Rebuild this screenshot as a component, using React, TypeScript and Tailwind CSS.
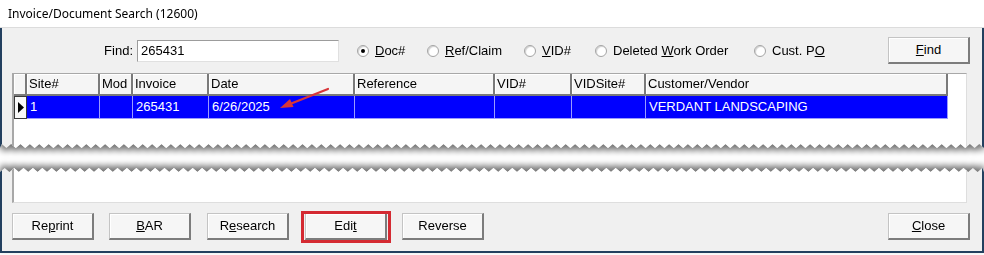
import type { ReactNode } from "react";

const W = 984;

// zig-zag "torn paper" edge, returned as a clip-path polygon
function tornBottom(h: number, amp = 4, period = 9.4) {
  const pts = ["0px 0px", `${W}px 0px`];
  let i = 0;
  for (let x = W; x > -period; x -= period / 2, i++) {
    pts.push(`${Math.max(x, 0).toFixed(1)}px ${i % 2 ? h - amp : h}px`);
  }
  return `polygon(${pts.join(",")})`;
}

function tornTop(h: number, amp = 4, period = 9.4) {
  const pts: string[] = [];
  let i = 0;
  for (let x = 0; x < W + period; x += period / 2, i++) {
    pts.push(`${Math.min(x, W).toFixed(1)}px ${i % 2 ? 0 : amp}px`);
  }
  pts.push(`${W}px ${h}px`, `0px ${h}px`);
  return `polygon(${pts.join(",")})`;
}

const COLS = [
  { label: "", w: 13 },
  { label: "Site#", w: 73, v: "1" },
  { label: "Mod", w: 33, v: "" },
  { label: "Invoice", w: 76, v: "265431" },
  { label: "Date", w: 146, v: "6/26/2025" },
  { label: "Reference", w: 140, v: "" },
  { label: "VID#", w: 77, v: "" },
  { label: "VIDSite#", w: 74, v: "" },
  { label: "Customer/Vendor", w: 302, v: "VERDANT LANDSCAPING" },
];

function Btn({ children, className = "" }: { children: ReactNode; className?: string }) {
  return (
    <button
      className={`relative flex h-[27px] w-[82px] items-center justify-center border-t border-l border-[#c4c4c4] border-r-2 border-b-2 border-r-[#7c7c7c] border-b-[#7c7c7c] bg-[#f6f6f6] text-[13px] text-black shadow-[inset_1px_1px_0_#ffffff] ${className}`}
    >
      {children}
    </button>
  );
}

function Radio({ checked, w, children }: { checked?: boolean; w: number; children: ReactNode }) {
  return (
    <div className="flex items-center gap-[6px]" style={{ width: w }}>
      <span className="flex h-[12px] w-[12px] shrink-0 items-center justify-center rounded-full border border-[#a4a4a4] bg-white shadow-[inset_1px_1px_1px_#d0d0d0]">
        {checked && <span className="h-[4px] w-[4px] rounded-full bg-black" />}
      </span>
      <span className="text-[13px] text-black">{children}</span>
    </div>
  );
}

export default function App() {
  return (
    <div className="flex h-[255px] w-[984px] flex-col overflow-hidden bg-white font-['Liberation_Sans',Arial,sans-serif]">
      {/* upper half of the window, torn at the bottom */}
      <div className="h-[148px] shrink-0 [filter:drop-shadow(0_4px_3px_rgba(0,0,0,0.55))]">
        <div className="relative h-[148px]" style={{ clipPath: tornBottom(148) }}>
          <div className="flex h-[28px] items-center border-b border-[#dcdcdc] bg-white pl-[8px] font-['Noto_Sans',sans-serif] text-[12px] text-black">
            Invoice/Document Search (12600)
          </div>
          <div className="h-[120px] border-x-2 border-[#23405f] bg-[#f0f0f0] pt-[9px]">
            {/* search row */}
            <div className="flex h-[27px] items-center">
              <span className="w-[131px] text-right text-[13px]">Find:</span>
              <div className="ml-[4px] flex h-[22px] w-[202px] items-center border border-[#9c9c9c] border-r-[#e0e0e0] border-b-[#e0e0e0] bg-white pl-[3px] text-[13px]">
                265431
              </div>
              <div className="ml-[18px] flex items-center">
                <Radio checked w={70}>
                  <u>D</u>oc#
                </Radio>
                <Radio w={97}>
                  <u>R</u>ef/Claim
                </Radio>
                <Radio w={71}>
                  <u>V</u>ID#
                </Radio>
                <Radio w={159}>
                  Deleted <u>W</u>ork Order
                </Radio>
                <Radio w={100}>
                  Cust. P<u>O</u>
                </Radio>
              </div>
              <Btn className="ml-auto mr-[12px]">
                <u>F</u>ind
              </Btn>
            </div>

            {/* result grid */}
            <div className="ml-[10px] mt-[9px] h-[90px] w-[955px] border-t border-l-2 border-r border-[#a8a8a8] border-r-[#dedede] bg-white">
              <div className="flex h-[22px]">
                {COLS.map((c, i) => (
                  <div
                    key={i}
                    style={{ width: c.w }}
                    className="flex items-center border-r-2 border-b-2 border-[#7a7a7a] bg-[#f5f5f5] pl-[2px] text-[13px] shadow-[inset_1px_1px_0_#ffffff]"
                  >
                    {c.label}
                  </div>
                ))}
              </div>
              <div className="flex h-[23px]">
                {COLS.map((c, i) =>
                  i === 0 ? (
                    <div
                      key={i}
                      style={{ width: c.w }}
                      className="flex items-center justify-center border border-[#3a3a3a] bg-[#f8f8f8]"
                    >
                      <svg width="6" height="11" viewBox="0 0 6 11">
                        <path d="M0 0L6 5.5L0 11Z" fill="#000" />
                      </svg>
                    </div>
                  ) : (
                    <div
                      key={i}
                      style={{ width: c.w }}
                      className="flex items-center border-r border-b border-[#9a9aff] bg-[#0000ff] pl-[3px] text-[13px] text-white"
                    >
                      {c.v}
                    </div>
                  ),
                )}
              </div>
            </div>
          </div>

          {/* red annotation arrow */}
          <svg className="absolute left-[270px] top-[80px]" width="70" height="35" viewBox="270 80 70 35">
            <line x1="328" y1="89" x2="290" y2="104" stroke="#d8363a" strokeWidth="2.2" strokeLinecap="round" />
            <path d="M280 108L290 99L293.5 107Z" fill="#d8363a" />
          </svg>
        </div>
      </div>

      <div className="h-[20px] shrink-0" />

      {/* lower half of the window, torn at the top */}
      <div className="h-[85px] shrink-0 [filter:drop-shadow(0_-4px_3px_rgba(0,0,0,0.55))]">
        <div
          className="h-[85px] border-x-2 border-b-2 border-[#23405f] bg-[#f0f0f0]"
          style={{ clipPath: tornTop(85) }}
        >
          <div className="ml-[10px] h-[35px] w-[955px] border-l-2 border-r border-b border-[#a8a8a8] border-r-[#dedede] border-b-[#dedede] bg-white" />
          <div className="mt-[10px] flex items-center pl-[10px] pr-[12px]">
            <Btn>
              Re<u>p</u>rint
            </Btn>
            <Btn className="ml-[15px]">
              <u>B</u>AR
            </Btn>
            <Btn className="ml-[16px]">
              R<u>e</u>search
            </Btn>
            <div className="relative ml-[16px]">
              <Btn>
                Edi<u>t</u>
              </Btn>
              <span className="pointer-events-none absolute -inset-x-[4px] -top-[2px] -bottom-[3px] border-[3px] border-[#d42a32]" />
            </div>
            <Btn className="ml-[15px]">Reverse</Btn>
            <Btn className="ml-auto">
              <u>C</u>lose
            </Btn>
          </div>
        </div>
      </div>
    </div>
  );
}
